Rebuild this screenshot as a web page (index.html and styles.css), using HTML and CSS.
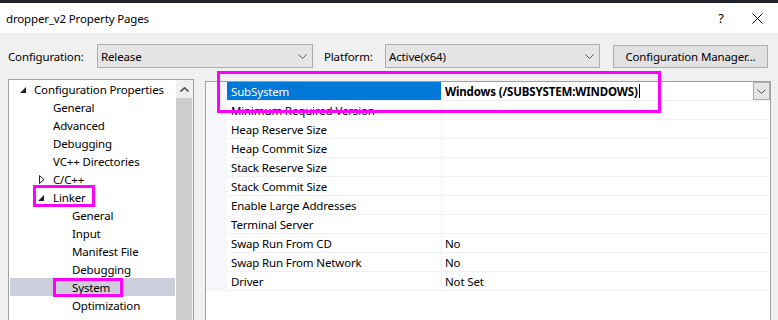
FILE: index.html
```html
<!DOCTYPE html>
<html>
<head>
    <meta charset="utf-8">
    <title>dropper_v2 Property Pages</title>
    <link rel="stylesheet" href="styles.css">
</head>
<body>
    <div id="dialog">
        <div class="topStrip"></div>
        <div class="titleBar">
            <span class="titleText">dropper_v2 Property Pages</span>
            <span class="titleHelp">?</span>
            <span class="titleClose">
                <svg width="11" height="11" viewBox="0 0 11 11"><path d="M0.5 0.5 L10.5 10.5 M10.5 0.5 L0.5 10.5" stroke="#000" stroke-width="1"/></svg>
            </span>
        </div>

        <div class="content">
            <div class="configRow">
                <label class="cfgLabel">Configuration:</label>
                <div class="combo comboConfig">
                    <span>Release</span>
                    <svg class="chev" width="9" height="5" viewBox="0 0 9 5"><path d="M0.5 0.5 L4.5 4.5 L8.5 0.5" fill="none" stroke="#555" stroke-width="1"/></svg>
                </div>
                <label class="platLabel">Platform:</label>
                <div class="combo comboPlatform">
                    <span>Active(x64)</span>
                    <svg class="chev" width="9" height="5" viewBox="0 0 9 5"><path d="M0.5 0.5 L4.5 4.5 L8.5 0.5" fill="none" stroke="#555" stroke-width="1"/></svg>
                </div>
                <button class="cfgManager">Configuration Manager...</button>
            </div>

            <div class="mainArea">
                <div class="tree">
                    <div class="treeBody">
                        <div class="node lvl0"><svg class="tri" width="6" height="6" viewBox="0 0 6 6"><path d="M6 0 L6 6 L0 6 Z" fill="#222"/></svg>Configuration Properties</div>
                        <div class="node lvl1">General</div>
                        <div class="node lvl1">Advanced</div>
                        <div class="node lvl1">Debugging</div>
                        <div class="node lvl1">VC++ Directories</div>
                        <div class="node lvl1"><svg class="triOpen" width="6" height="9" viewBox="0 0 6 9"><path d="M0.5 0.5 L5 4.5 L0.5 8.5 Z" fill="none" stroke="#222" stroke-width="1"/></svg>C/C++</div>
                        <div class="node lvl1"><svg class="tri" width="6" height="6" viewBox="0 0 6 6"><path d="M6 0 L6 6 L0 6 Z" fill="#222"/></svg>Linker</div>
                        <div class="node lvl2">General</div>
                        <div class="node lvl2">Input</div>
                        <div class="node lvl2">Manifest File</div>
                        <div class="node lvl2">Debugging</div>
                        <div class="node lvl2 current">System</div>
                        <div class="node lvl2">Optimization</div>
                        <div class="node lvl2">Embedded IDL</div>
                    </div>
                    <div class="scrollBar">
                        <div class="scrollUp">
                            <svg width="9" height="5" viewBox="0 0 9 5"><path d="M0.5 4.5 L4.5 0.8 L8.5 4.5" fill="none" stroke="#555" stroke-width="1.6"/></svg>
                        </div>
                        <div class="scrollThumb"></div>
                    </div>
                </div>

                <div class="propGrid">
                    <div class="prop selected">
                        <span class="gutter"></span>
                        <span class="pname">SubSystem</span>
                        <span class="pvalue strong">Windows (/SUBSYSTEM:WINDOWS)<i class="caret"></i>
                            <span class="dropBtn"><svg width="9" height="5" viewBox="0 0 9 5"><path d="M0.5 0.5 L4.5 4.5 L8.5 0.5" fill="none" stroke="#555" stroke-width="1"/></svg></span>
                        </span>
                    </div>
                    <div class="prop"><span class="gutter"></span><span class="pname">Minimum Required Version</span><span class="pvalue"></span></div>
                    <div class="prop"><span class="gutter"></span><span class="pname">Heap Reserve Size</span><span class="pvalue"></span></div>
                    <div class="prop"><span class="gutter"></span><span class="pname">Heap Commit Size</span><span class="pvalue"></span></div>
                    <div class="prop"><span class="gutter"></span><span class="pname">Stack Reserve Size</span><span class="pvalue"></span></div>
                    <div class="prop"><span class="gutter"></span><span class="pname">Stack Commit Size</span><span class="pvalue"></span></div>
                    <div class="prop"><span class="gutter"></span><span class="pname">Enable Large Addresses</span><span class="pvalue"></span></div>
                    <div class="prop"><span class="gutter"></span><span class="pname">Terminal Server</span><span class="pvalue"></span></div>
                    <div class="prop"><span class="gutter"></span><span class="pname">Swap Run From CD</span><span class="pvalue">No</span></div>
                    <div class="prop"><span class="gutter"></span><span class="pname">Swap Run From Network</span><span class="pvalue">No</span></div>
                    <div class="prop"><span class="gutter"></span><span class="pname">Driver</span><span class="pvalue">Not Set</span></div>
                </div>
            </div>
        </div>

        <div class="mark markSubsystem"></div>
        <div class="mark markLinker"></div>
        <div class="mark markSystem"></div>
    </div>
</body>
</html>
```

FILE: styles.css
```css
body {
    margin: 0;
    font-family: "Noto Sans", "Open Sans", sans-serif;
    font-size: 11.5px;
    letter-spacing: -0.15px;
    color: #000;
    background: #f0f0f0;
    overflow: hidden;
}
#dialog {
    position: relative;
    width: 778px;
    height: 320px;
    overflow: hidden;
    background: #f0f0f0;
}
.topStrip {
    height: 3px;
    background: #1f2327;
}
.titleBar {
    height: 30px;
    background: #fff;
    display: flex;
    align-items: center;
    padding-left: 6px;
}
.titleText {
    flex: 1;
    padding-top: 1px;
}
.titleHelp {
    width: 46px;
    text-align: center;
    font-size: 13px;
}
.titleClose {
    width: 26px;
    margin-right: 8px;
    display: flex;
    justify-content: center;
}
.content {
    padding: 11px 0 0 8px;
}
.configRow {
    display: flex;
    align-items: center;
    height: 24px;
}
.cfgLabel {
    width: 89px;
    padding-top: 1px;
}
.platLabel {
    width: 61px;
    margin-left: 11px;
    padding-top: 1px;
}
.combo {
    box-sizing: border-box;
    height: 24px;
    background: #e5e5e5;
    border: 1px solid #adadad;
    display: flex;
    align-items: center;
    justify-content: space-between;
    padding: 1px 5px 0 3px;
}
.comboConfig {
    width: 216px;
}
.comboPlatform {
    width: 215px;
}
.cfgManager {
    box-sizing: border-box;
    width: 155px;
    height: 23px;
    margin-left: 13px;
    background: #e1e1e1;
    border: 1px solid #adadad;
    font-family: inherit;
    font-size: 11.5px;
    letter-spacing: -0.15px;
    color: #000;
    padding: 1px 0 0;
}
.mainArea {
    display: flex;
    align-items: flex-start;
    margin-top: 11px;
}
.tree {
    box-sizing: border-box;
    width: 186px;
    height: 260px;
    background: #fff;
    border: 1px solid #a0a0a0;
    display: flex;
}
.treeBody {
    flex: 1;
    padding: 0 1px;
}
.node {
    position: relative;
    box-sizing: border-box;
    height: 18px;
    line-height: 17px;
    padding-top: 1px;
    white-space: nowrap;
}
.lvl0 { padding-left: 24px; }
.lvl1 { padding-left: 43px; }
.lvl2 { padding-left: 62px; }
.node.current {
    background: #cccedb;
}
.tri {
    position: absolute;
    top: 7px;
    margin-left: -15px;
}
.lvl0 .tri {
    margin-left: -14px;
}
.triOpen {
    position: absolute;
    top: 5px;
    margin-left: -14px;
}
.scrollBar {
    width: 17px;
    background: #f0f0f0;
    display: flex;
    flex-direction: column;
}
.scrollUp {
    height: 18px;
    display: flex;
    align-items: center;
    justify-content: center;
}
.scrollThumb {
    flex: 1;
    margin: 0 1px 0 0;
    background: #cdcdcd;
}
.propGrid {
    box-sizing: border-box;
    width: 566px;
    height: 250px;
    margin-left: 11px;
    margin-top: 2px;
    background: #fff;
    border-left: 1px solid #a0a0a0;
    border-top: 1px solid #a0a0a0;
    border-right: 1px solid #a0a0a0;
}
.prop {
    display: grid;
    grid-template-columns: 21px 215px 1fr;
    height: 19px;
}
.gutter {
    background: #f5f7fb;
}
.pname, .pvalue {
    box-sizing: border-box;
    height: 19px;
    line-height: 16px;
    padding-top: 2px;
    border-bottom: 1px solid #f0f0f5;
    white-space: nowrap;
}
.pname {
    padding-left: 4px;
    border-right: 1px solid #f0f0f5;
}
.pvalue {
    padding-left: 3px;
    position: relative;
}
.selected .pname {
    background: #0078d7;
    color: #fff;
}
.strong {
    font-weight: bold;
}
.caret {
    display: inline-block;
    width: 1px;
    height: 14px;
    margin-left: 1px;
    vertical-align: -2px;
    background: #000;
}
.dropBtn {
    position: absolute;
    right: 0;
    top: 0;
    box-sizing: border-box;
    width: 17px;
    height: 18px;
    background: #e5e5e5;
    border: 1px solid #adadad;
    display: flex;
    align-items: center;
    justify-content: center;
}
.mark {
    position: absolute;
    box-sizing: border-box;
    border: 3px solid #ff00ff;
}
.markSubsystem {
    left: 217px;
    top: 71px;
    width: 444px;
    height: 42px;
}
.markLinker {
    left: 33px;
    top: 185px;
    width: 62px;
    height: 22px;
}
.markSystem {
    left: 53px;
    top: 278px;
    width: 70px;
    height: 19px;
}
```
